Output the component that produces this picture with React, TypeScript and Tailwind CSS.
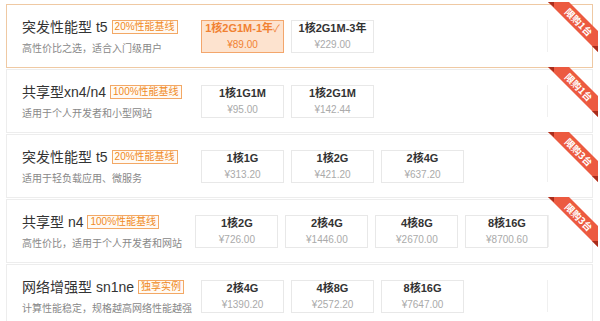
type Option = {
  name: string;
  price: string;
  selected?: boolean;
};

type Plan = {
  title: string;
  badge: string;
  desc: string;
  limit?: string;
  active?: boolean;
  options: Option[];
};

const plans: Plan[] = [
  {
    title: "突发性能型 t5",
    badge: "20%性能基线",
    desc: "高性价比之选，适合入门级用户",
    limit: "限购1台",
    active: true,
    options: [
      { name: "1核2G1M-1年", price: "¥89.00", selected: true },
      { name: "1核2G1M-3年", price: "¥229.00" },
    ],
  },
  {
    title: "共享型xn4/n4",
    badge: "100%性能基线",
    desc: "适用于个人开发者和小型网站",
    limit: "限购1台",
    options: [
      { name: "1核1G1M", price: "¥95.00" },
      { name: "1核2G1M", price: "¥142.44" },
    ],
  },
  {
    title: "突发性能型 t5",
    badge: "20%性能基线",
    desc: "适用于轻负载应用、微服务",
    limit: "限购3台",
    options: [
      { name: "1核1G", price: "¥313.20" },
      { name: "1核2G", price: "¥421.20" },
      { name: "2核4G", price: "¥637.20" },
    ],
  },
  {
    title: "共享型 n4",
    badge: "100%性能基线",
    desc: "高性价比，适用于个人开发者和网站",
    limit: "限购3台",
    options: [
      { name: "1核2G", price: "¥726.00" },
      { name: "2核4G", price: "¥1446.00" },
      { name: "4核8G", price: "¥2670.00" },
      { name: "8核16G", price: "¥8700.60" },
    ],
  },
  {
    title: "网络增强型 sn1ne",
    badge: "独享实例",
    desc: "计算性能稳定，规格越高网络性能越强",
    options: [
      { name: "2核4G", price: "¥1390.20" },
      { name: "4核8G", price: "¥2572.20" },
      { name: "8核16G", price: "¥7647.00" },
    ],
  },
];

// corner ribbon, drawn over the card's top-right corner
const Ribbon = ({ text }: { text: string }) => (
  <svg
    className="pointer-events-none absolute -top-[4px] -right-[8px]"
    width="54"
    height="54"
    viewBox="0 0 54 54"
  >
    <polygon points="2,1 23,1 52,30 52,51" fill="#ec5a40" />
    <polygon points="2,1 8,1 8,6" fill="#a92d1c" />
    <polygon points="46,45 52,45 52,51" fill="#a92d1c" />
    <text
      x="33"
      y="21"
      transform="rotate(45 33 21)"
      textAnchor="middle"
      dominantBaseline="central"
      fontSize="9.5"
      fontWeight="bold"
      fill="#ffffff"
      fontFamily="'Noto Sans CJK SC', sans-serif"
    >
      {text}
    </text>
  </svg>
);

const OptionBox = ({ option }: { option: Option }) => (
  <div
    className={
      option.selected
        ? "flex h-[33px] w-[83px] flex-col items-center justify-center border border-[#f3a66c] bg-[#fde3cf]"
        : "flex h-[33px] w-[83px] flex-col items-center justify-center border border-[#e8e8e8] bg-white"
    }
  >
    <div
      className={
        option.selected
          ? "text-[11px] font-bold leading-[15px] text-[#f18132]"
          : "text-[11px] font-bold leading-[15px] text-[#333]"
      }
    >
      {option.name}
      {option.selected && (
        <span className="text-[10px] font-normal">✓</span>
      )}
    </div>
    <div
      className={
        option.selected
          ? "mt-[2px] text-[10px] leading-[13px] text-[#f18132]"
          : "mt-[2px] text-[10px] leading-[13px] text-[#aaa]"
      }
    >
      {option.price}
    </div>
  </div>
);

export default function App() {
  return (
    <div className="h-[321px] w-[600px] overflow-hidden bg-white pl-[6px] pt-[4px] font-['Liberation_Sans','Noto_Sans_CJK_SC',sans-serif]">
      <div className="flex w-[587px] flex-col gap-[1px]">
        {plans.map((plan, i) => (
          <div
            key={i}
            className={
              plan.active
                ? "relative flex h-[64px] items-center border border-[#efc9a3] bg-white"
                : "relative flex h-[64px] items-center border border-[#ededed] bg-white"
            }
          >
            <div className="flex w-[194px] flex-col pl-[15px]">
              <div className="flex items-center gap-[4px]">
                <span className="text-[14px] leading-[20px] text-[#333]">
                  {plan.title}
                </span>
                <span className="border border-[#f3a865] bg-[#fffaf4] px-[2px] text-[10px] leading-[12px] text-[#f08a24]">
                  {plan.badge}
                </span>
              </div>
              <div className="mt-[5px] text-[10px] leading-[14px] text-[#888]">
                {plan.desc}
              </div>
            </div>

            <div className="flex gap-[7px]">
              {plan.options.map((option) => (
                <OptionBox
                  key={option.name}
                  option={option}
                />
              ))}
            </div>

            <div className="ml-auto h-[32px] w-[45px] border-l border-[#f0f0f0]" />

            {plan.limit && <Ribbon text={plan.limit} />}
          </div>
        ))}
      </div>
    </div>
  );
}
